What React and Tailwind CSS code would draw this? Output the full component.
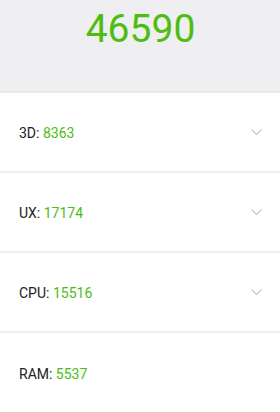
import React from "react";

const scores = [
    { label: "3D", value: 8363, expandable: true },
    { label: "UX", value: 17174, expandable: true },
    { label: "CPU", value: 15516, expandable: true },
    { label: "RAM", value: 5537, expandable: false },
];

function Chevron() {
    return (
        <svg width="11" height="6" viewBox="0 0 11 6" fill="none" className="mr-[18px]">
            <path d="M0.5 0.5l5 5 5-5" stroke="#c4c4c4" strokeWidth="1.1" />
        </svg>
    );
}

export default function App() {
    return (
        <div className="w-[280px] h-[412px] overflow-hidden bg-white font-['Roboto',sans-serif]">
            <div className="h-[93px] bg-[#efeef0] flex justify-center border-b-2 border-[#e9e8ea]">
                <div className="text-[39px] leading-none text-[#4cbd12] mt-[10px] pl-[1px]">46590</div>
            </div>
            {scores.map((item) => (
                <div
                    key={item.label}
                    className="h-[80px] flex items-center justify-between border-b-2 border-[#efeeef] last:border-b-0"
                >
                    <span className="pl-[19px] text-[14px] text-[#222222] pt-[2px]">
                        {item.label}: <span className="text-[#4cbd12]">{item.value}</span>
                    </span>
                    {item.expandable && <Chevron />}
                </div>
            ))}
        </div>
    );
}
